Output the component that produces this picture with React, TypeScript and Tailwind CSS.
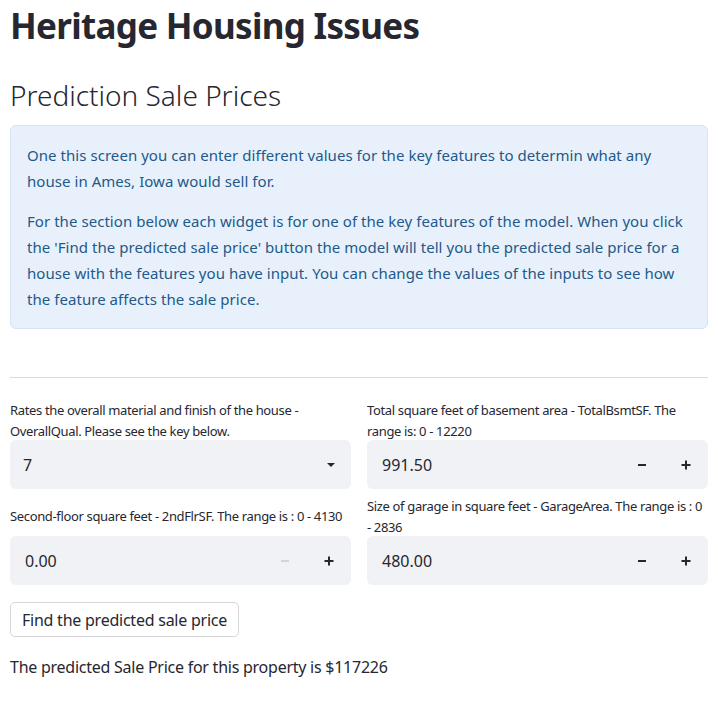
const font = { fontFamily: '"Noto Sans", "Open Sans", sans-serif' };

function Minus({ disabled }: { disabled?: boolean }) {
  return (
    <svg width="10" height="10" viewBox="0 0 10 10">
      <line x1="1" y1="5" x2="9" y2="5" stroke={disabled ? "#d3d4d9" : "#262730"} strokeWidth="2" />
    </svg>
  );
}

function Plus() {
  return (
    <svg width="10" height="10" viewBox="0 0 10 10">
      <line x1="0.5" y1="5" x2="9.5" y2="5" stroke="#262730" strokeWidth="2" />
      <line x1="5" y1="0.5" x2="5" y2="9.5" stroke="#262730" strokeWidth="2" />
    </svg>
  );
}

function NumberInput({ value, minDisabled }: { value: string; minDisabled?: boolean }) {
  return (
    <div className="flex h-[49px] items-center rounded-md bg-[#f0f2f6]">
      <span className="flex-1 pl-[15px] text-base text-[#262730]">{value}</span>
      <button className="flex h-full w-[44px] items-center justify-center">
        <Minus disabled={minDisabled} />
      </button>
      <button className="flex h-full w-[44px] items-center justify-center">
        <Plus />
      </button>
    </div>
  );
}

export default function App() {
  return (
    <div className="min-h-[702px] w-[718px] bg-white px-[10px] text-[#262730]" style={font}>
      <h1 className="pt-[3px] text-[35px] font-bold leading-[46px] tracking-[-0.7px]">Heritage Housing Issues</h1>

      <h2 className="mt-[26px] text-[28px] font-light leading-[40px]">Prediction Sale Prices</h2>

      <div className="mt-[10px] rounded-md border border-[#d3e5f8] bg-[#e8f1fb] px-[16px] py-[16px] text-[15px] leading-[26px] tracking-[0.05px] text-[#22598a]">
        <p>
          One this screen you can enter different values for the key features to determin what any house in Ames, Iowa
          would sell for.
        </p>
        <p className="mt-[14px]">
          For the section below each widget is for one of the key features of the model. When you click the 'Find the
          predicted sale price' button the model will tell you the predicted sale price for a house with the features you
          have input. You can change the values of the inputs to see how the feature affects the sale price.
        </p>
      </div>

      <hr className="mt-[48px] border-t border-[#d9d9dc]" />

      <div className="mt-[22px] grid grid-cols-2 gap-x-4 text-[13px] tracking-[-0.35px]">
        <div className="flex flex-col">
          <label className="h-[40px] leading-[20.5px]">
            Rates the overall material and finish of the house - OverallQual. Please see the key below.
          </label>
          <div className="flex h-[49px] items-center justify-between rounded-md bg-[#f0f2f6] pl-[13px] pr-[15px] tracking-normal">
            <span className="text-base">7</span>
            <svg width="10" height="6" viewBox="0 0 10 6">
              <path d="M1 1 L9 1 L5 5 Z" fill="#262730" />
            </svg>
          </div>
          <label className="mt-[17px] leading-[20.5px]">Second-floor square feet - 2ndFlrSF. The range is : 0 - 4130</label>
          <div className="mt-[9.5px] tracking-normal">
            <NumberInput value="0.00" minDisabled />
          </div>
        </div>

        <div className="flex flex-col">
          <label className="h-[40px] leading-[20.5px]">
            Total square feet of basement area - TotalBsmtSF. The range is: 0 - 12220
          </label>
          <div className="tracking-normal">
            <NumberInput value="991.50" />
          </div>
          <label className="mt-[7px] leading-[20.5px]">
            Size of garage in square feet - GarageArea. The range is : 0 - 2836
          </label>
          <div className="-mt-[1px] tracking-normal">
            <NumberInput value="480.00" />
          </div>
        </div>
      </div>

      <button className="mt-[17px] h-[35px] rounded-[5px] border border-[#d6d6d9] bg-white px-[11px] text-base tracking-[-0.24px]">
        Find the predicted sale price
      </button>

      <p className="mt-[17px] text-base leading-[26px] tracking-[-0.25px]">
        The predicted Sale Price for this property is $117226
      </p>
    </div>
  );
}
